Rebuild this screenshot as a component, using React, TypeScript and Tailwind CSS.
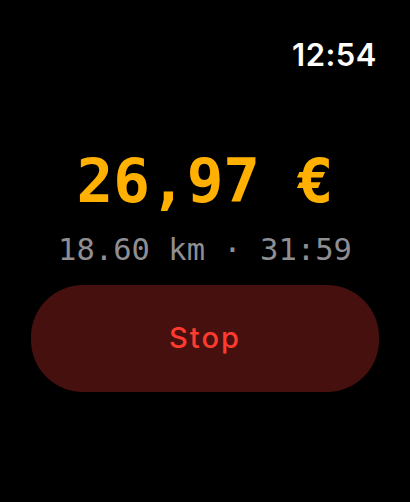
export default function App() {
  return (
    <div className="w-[410px] h-[502px] bg-black flex flex-col overflow-hidden">
      {/* status bar */}
      <div className="flex justify-end pr-[33px] pt-[39px] h-[80px]">
        <span className="text-white text-[31px] leading-none font-semibold tracking-[0.5px] font-['Inter',sans-serif]">
          12:54
        </span>
      </div>

      <div className="flex flex-col items-center mt-[70px]">
        <div className="text-[#ffb000] text-[61px] leading-none font-bold font-['DejaVu_Sans_Mono',monospace]">
          26,97 €
        </div>
        <div className="mt-[24px] text-[#8e8e93] text-[30.5px] leading-none font-['DejaVu_Sans_Mono',monospace]">
          18.60 km · 31:59
        </div>
      </div>

      <div className="px-[31px] mt-[19px]">
        <button className="w-full h-[107px] rounded-[52px] bg-[#45100e] flex items-center justify-center">
          <span className="text-[#ff3b30] text-[29px] font-medium tracking-[2px] font-['Inter',sans-serif]">
            Stop
          </span>
        </button>
      </div>
    </div>
  );
}
